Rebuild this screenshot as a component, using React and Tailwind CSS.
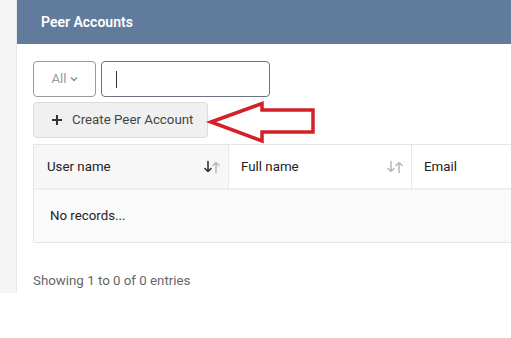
import React from 'react';

const SortIcon = ({ active }) => (
  <svg width="16" height="14" viewBox="0 0 16 14" fill="none" strokeWidth="1.6" strokeLinecap="round" strokeLinejoin="round">
    <g stroke={active ? '#333' : '#bbb'}>
      <path d="M4 1.5v10M1 8.5l3 3 3-3" />
    </g>
    <g stroke="#bbb">
      <path d="M12 12.5v-10M9 5.5l3-3 3 3" />
    </g>
  </svg>
);

const App = () => {
  return (
    <div className="relative w-full h-[338px] bg-white overflow-hidden flex items-start" style={{ fontFamily: 'Roboto, "Liberation Sans", sans-serif' }}>
      <div className="w-[17px] h-[293px] shrink-0 bg-[#f5f5f5] border-r border-[#e8e8e8]" />
      <div className="flex-1 min-w-0 flex flex-col">
        <div className="h-[44px] bg-[#607b9c] flex items-center pl-[24px] text-white text-[14px] font-semibold">
          Peer Accounts
        </div>
        <div className="pl-[16px] pt-[17px] text-[13.3px]">
          <div className="flex gap-[5px]">
            <div className="w-[63px] h-[36px] border border-[#9a9a9a] rounded-[4px] flex items-center justify-center gap-[3px] text-[#999]">
              All
              <svg width="8" height="6" viewBox="0 0 8 6" fill="none" stroke="#888" strokeWidth="1.3"><path d="M1 1.5l3 3 3-3" /></svg>
            </div>
            <div className="w-[169px] h-[36px] border border-[#6b7280] rounded-[4px] flex items-center pl-[14px]">
              <div className="w-[1px] h-[17px] bg-[#333]" />
            </div>
          </div>
          <button className="mt-[5px] w-[175px] h-[36px] bg-[#f0f0f0] border border-[#dcdcdc] rounded-[4px] flex items-center pl-[17px] gap-[9px] text-[#444]">
            <svg width="12" height="12" viewBox="0 0 12 12" stroke="#333" strokeWidth="2"><path d="M6 1v10M1 6h10" /></svg>
            Create Peer Account
          </button>
          <div className="mt-[6px] border-t border-l border-[#e5e5e5]">
            <div className="flex h-[45px] border-b-2 border-[#eeeeee] text-[#222]">
              <div className="w-[195px] shrink-0 bg-[#f7f7f7] border-r border-[#e8e8e8] flex items-center justify-between pl-[13px] pr-[8px]">
                User name
                <SortIcon active />
              </div>
              <div className="w-[183px] shrink-0 bg-white border-r border-[#e8e8e8] flex items-center justify-between pl-[12px] pr-[8px]">
                Full name
                <SortIcon />
              </div>
              <div className="flex-1 bg-white flex items-center pl-[12px]">Email</div>
            </div>
            <div className="h-[53px] bg-[#fafafa] border-b border-[#e5e5e5] flex items-center pl-[16px] text-[#222]">
              No records...
            </div>
          </div>
          <div className="mt-[28px] text-[#666]">Showing 1 to 0 of 0 entries</div>
        </div>
      </div>
      <svg className="absolute left-[205px] top-[98px]" width="115" height="50" viewBox="205 98 115 50" fill="none">
        <path d="M211 122 L262 103.5 L262 110 L313 110 L313 132 L262 132 L262 141 Z" stroke="#d42028" strokeWidth="3.5" strokeLinejoin="miter" />
      </svg>
    </div>
  );
};

export default App;
